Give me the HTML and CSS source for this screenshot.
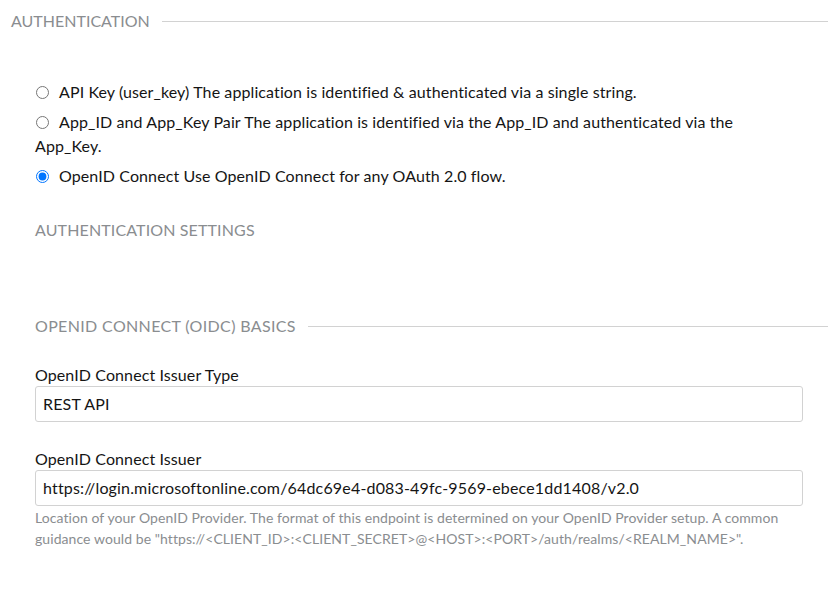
FILE: index.html
```html
<!DOCTYPE html>
<html lang="en">
<head>
<meta charset="utf-8">
<title>Authentication</title>
<link rel="stylesheet" href="styles.css">
</head>
<body>
<section class="auth">
  <h2 class="section-title">AUTHENTICATION</h2>
  <div class="inner">
    <ul class="radios">
      <li class="radio-row"><label><input type="radio" name="auth" class="radio">API Key (user_key) The application is identified &amp; authenticated via a single string.</label></li>
      <li class="radio-row"><label><input type="radio" name="auth" class="radio">App_ID and App_Key Pair The application is identified via the App_ID and authenticated via the App_Key.</label></li>
      <li class="radio-row"><label><input type="radio" name="auth" class="radio" checked>OpenID Connect Use OpenID Connect for any OAuth 2.0 flow.</label></li>
    </ul>
    <h3 class="sub-title">AUTHENTICATION SETTINGS</h3>
    <section class="oidc">
      <h3 class="section-title oidc-title">OPENID CONNECT (OIDC) BASICS</h3>
      <div class="fields">
        <div class="field">
          <label class="field-label" for="type">OpenID Connect Issuer Type</label>
          <div class="input" id="type">REST API</div>
        </div>
        <div class="field">
          <label class="field-label" for="issuer">OpenID Connect Issuer</label>
          <div class="input" id="issuer">https://login.microsoftonline.com/64dc69e4-d083-49fc-9569-ebece1dd1408/v2.0</div>
          <p class="help">Location of your OpenID Provider. The format of this endpoint is determined on your OpenID Provider setup. A common guidance would be "https://&lt;CLIENT_ID&gt;:&lt;CLIENT_SECRET&gt;@&lt;HOST&gt;:&lt;PORT&gt;/auth/realms/&lt;REALM_NAME&gt;".</p>
        </div>
      </div>
    </section>
  </div>
</section>
</body>
</html>
```

FILE: styles.css
```css
* { box-sizing: border-box; }
html, body { margin: 0; padding: 0; background: #fff; }
body {
  font-family: "Lato", "Liberation Sans", sans-serif;
  font-size: 16px;
  line-height: 24px;
  letter-spacing: 0.1px;
  color: #151515;
}
.auth { padding: 9px 0 0 11px; }
.section-title {
  display: flex;
  align-items: center;
  gap: 12px;
  margin: 0;
  font-size: 16px;
  font-weight: 400;
  line-height: 24px;
  letter-spacing: 0;
  color: #8a8d90;
}
.section-title::after {
  content: "";
  flex: 1;
  border-top: 1px solid #d2d2d2;
  margin-top: 1px;
}
.oidc-title { letter-spacing: 0.35px; }
.inner { padding: 47px 0 0 24px; }
.radios {
  list-style: none;
  margin: 0;
  padding: 0 60px 0 0;
  display: flex;
  flex-direction: column;
  gap: 6px;
}
.radio {
  margin: 0 10px 0 1px;
  width: 13px;
  height: 13px;
  vertical-align: -1px;
}
.sub-title {
  margin: 30px 0 0;
  font-size: 16px;
  font-weight: 400;
  line-height: 24px;
  letter-spacing: 0.13px;
  color: #8a8d90;
}
.oidc { margin-top: 72px; }
.fields {
  padding: 26px 25px 0 0;
  display: flex;
  flex-direction: column;
  gap: 26px;
}
.field { display: flex; flex-direction: column; }
.field-label { line-height: 22px; }
.input {
  height: 36px;
  border: 1px solid #d2d2d2;
  border-radius: 3px;
  padding: 0 7px;
  line-height: 34px;
  letter-spacing: 0.17px;
  white-space: nowrap;
  overflow: hidden;
}
.help {
  margin: 1px 0 0;
  font-size: 14px;
  line-height: 21px;
  letter-spacing: 0.07px;
  color: #8a8d90;
}
```
